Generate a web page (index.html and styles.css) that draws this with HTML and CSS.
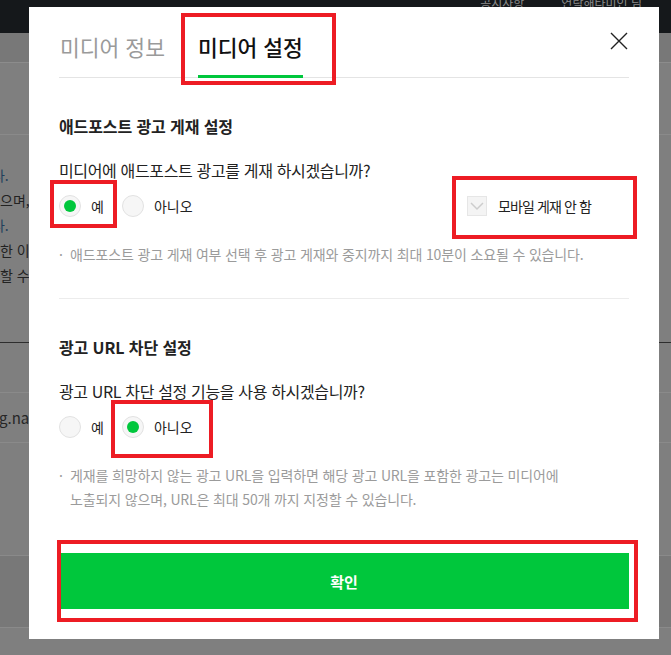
FILE: index.html
```html
<!DOCTYPE html>
<html lang="ko">
<head>
    <meta charset="UTF-8">
    <meta name="viewport" content="width=device-width, initial-scale=1.0">
    <title>미디어 설정</title>
    <link rel="stylesheet" href="styles.css">
</head>
<body>
    <!-- 뒤쪽 페이지 (딤 처리된 상태) -->
    <div class="page">
        <header class="topbar">
            <nav class="gnb">
                <a href="#">공지사항</a>
                <a href="#">연락해타미인 님</a>
            </nav>
        </header>
        <div class="subbar"></div>
        <div class="bg-block"></div>
        <div class="bg-notes">
            <p class="link cut">니다.</p>
            <p>으며, 기존</p>
            <p class="link cut">니다.</p>
            <p>한 이력</p>
            <p>할 수</p>
        </div>
        <div class="bg-row"></div>
        <div class="bg-row url">g.naver.com</div>
        <div class="bg-block tall"></div>
        <div class="bg-foot"></div>
    </div>

    <!-- 팝업 -->
    <div class="modal">
        <div class="tabs">
            <a href="#" class="tab">미디어 정보</a>
            <a href="#" class="tab on">미디어 설정</a>
            <button class="btn-close" type="button" aria-label="닫기">
                <svg width="18" height="18" viewBox="0 0 18 18">
                    <path d="M1 1 L17 17 M17 1 L1 17" stroke="#222" stroke-width="1.4" fill="none"/>
                </svg>
            </button>
        </div>

        <div class="section">
            <h3>애드포스트 광고 게재 설정</h3>
            <p class="question">미디어에 애드포스트 광고를 게재 하시겠습니까?</p>
            <div class="options">
                <label class="radio checked"><span class="circle"></span>예</label>
                <label class="radio"><span class="circle"></span>아니오</label>
                <label class="check">
                    <span class="box">
                        <svg width="20" height="20" viewBox="0 0 20 20">
                            <path d="M4 7 L10 13 L16 7" stroke="#cdcdcd" stroke-width="1.5" fill="none"/>
                        </svg>
                    </span>
                    모바일 게재 안 함
                </label>
            </div>
            <p class="note"><span class="dot">·</span>애드포스트 광고 게재 여부 선택 후 광고 게재와 중지까지 최대 10분이 소요될 수 있습니다.</p>
        </div>

        <div class="section line">
            <h3>광고 URL 차단 설정</h3>
            <p class="question">광고 URL 차단 설정 기능을 사용 하시겠습니까?</p>
            <div class="options">
                <label class="radio"><span class="circle"></span>예</label>
                <label class="radio checked"><span class="circle"></span>아니오</label>
            </div>
            <p class="note"><span class="dot">·</span>게재를 희망하지 않는 광고 URL을 입력하면 해당 광고 URL을 포함한 광고는 미디어에<br>노출되지 않으며, URL은 최대 50개 까지 지정할 수 있습니다.</p>
        </div>

        <button class="btn-ok" type="button">확인</button>
    </div>

    <!-- 캡처 표시 -->
    <div class="mark mark-tab"></div>
    <div class="mark mark-yes"></div>
    <div class="mark mark-mobile"></div>
    <div class="mark mark-no"></div>
    <div class="mark mark-btn"></div>
</body>
</html>
```

FILE: styles.css
```css
body {
    font-family: "Noto Sans CJK KR", "Noto Sans", sans-serif;
    margin: 0;
    padding: 0;
    width: 671px;
    height: 655px;
    overflow: hidden;
    position: relative;
    background-color: #7f7f7f;
}

p {
    margin: 0;
}

a {
    text-decoration: none;
    color: inherit;
}

/* 뒤쪽 페이지 */
.topbar {
    height: 33px;
    background-color: #15181b;
    overflow: hidden;
}

.gnb {
    display: flex;
    justify-content: flex-end;
    gap: 37px;
    margin-top: -6px;
    padding-right: 29px;
    font-size: 12px;
    line-height: 18px;
    color: #8a8a8a;
}

.subbar {
    height: 29px;
    background-color: #787878;
    border-bottom: 1px solid #8c8c8c;
}

.bg-block {
    height: 71px;
    border-bottom: 1px solid #8a8a8a;
}

.bg-block.tall {
    height: 112px;
}

.bg-notes {
    padding: 28px 0 54px;
    font-size: 14px;
    line-height: 25px;
    color: #222222;
    white-space: nowrap;
    border-bottom: 1px solid #2e2e2e;
}

.bg-notes .cut {
    text-indent: -21px;
}

.bg-notes .link {
    color: #1f3f5c;
}

.bg-row {
    height: 49px;
    border-bottom: 1px solid #8a8a8a;
}

.bg-row.url {
    line-height: 49px;
    font-size: 15px;
    color: #262626;
    text-indent: -1px;
    white-space: nowrap;
}

.bg-foot {
    height: 71px;
    background-color: #787878;
    border-bottom: 1px solid #8a8a8a;
}

/* 팝업 */
.modal {
    position: absolute;
    left: 29px;
    top: 7px;
    width: 630px;
    height: 632px;
    box-sizing: border-box;
    padding: 0 30px;
    background-color: #ffffff;
}

.tabs {
    display: flex;
    align-items: flex-end;
    height: 70px;
    border-bottom: 1px solid #e4e4e4;
}

.tab {
    font-size: 21.5px;
    line-height: 26px;
    padding: 0 0 15px 1px;
    border-bottom: 3px solid transparent;
    margin-bottom: -1px;
    margin-right: 33px;
    color: #9a9a9a;
}

.tab.on {
    color: #111111;
    font-weight: 500;
    border-bottom-color: #00c73c;
    padding-left: 0;
}

.btn-close {
    align-self: flex-start;
    margin: 25px 1px 0 auto;
    padding: 0;
    border: none;
    background: none;
    width: 18px;
    height: 18px;
    cursor: pointer;
}

.section {
    padding: 38px 0 32px;
}

.section.line {
    border-top: 1px solid #ececec;
}

.section h3 {
    margin: 0;
    font-size: 16px;
    line-height: 20px;
    font-weight: bold;
    letter-spacing: -0.1px;
    color: #222222;
}

.question {
    margin-top: 23px;
    font-size: 16px;
    line-height: 22px;
    letter-spacing: -0.35px;
    color: #222222;
}

.options {
    display: flex;
    align-items: center;
    height: 22px;
    margin-top: 14px;
}

.radio {
    display: flex;
    align-items: center;
    margin-right: 18px;
    font-size: 14px;
    color: #222222;
}

.circle {
    width: 22px;
    height: 22px;
    box-sizing: border-box;
    border: 1px solid #e2e2e2;
    border-radius: 50%;
    background-color: #f6f6f6;
    margin-right: 10px;
    display: flex;
    align-items: center;
    justify-content: center;
}

.radio.checked .circle::after {
    content: "";
    width: 12px;
    height: 12px;
    border-radius: 50%;
    background-color: #00c73c;
}

.check {
    display: flex;
    align-items: center;
    margin-left: auto;
    margin-right: 38px;
    font-size: 14px;
    letter-spacing: -0.9px;
    color: #222222;
}

.box {
    width: 20px;
    height: 20px;
    box-sizing: border-box;
    border: 1px solid #e6e6e6;
    background-color: #f4f4f4;
    margin-right: 11px;
    display: flex;
}

.box svg {
    margin: -1px;
}

.note {
    margin-top: 25px;
    padding-left: 11px;
    text-indent: -11px;
    font-size: 14px;
    line-height: 24px;
    letter-spacing: -0.15px;
    color: #9b9b9b;
}

.note .dot {
    display: inline-block;
    width: 11px;
    text-indent: 0;
}

.btn-ok {
    display: block;
    width: 100%;
    height: 56px;
    margin-top: 10px;
    border: none;
    background-color: #00c73c;
    color: #ffffff;
    font-family: inherit;
    font-size: 15px;
    font-weight: bold;
    cursor: pointer;
}

/* 빨간 표시 박스 */
.mark {
    position: absolute;
    box-sizing: border-box;
    border: 4px solid #ed1c24;
}

.mark-tab {
    left: 181px;
    top: 13px;
    width: 155px;
    height: 72px;
}

.mark-yes {
    left: 50px;
    top: 180px;
    width: 67px;
    height: 48px;
}

.mark-mobile {
    left: 452px;
    top: 176px;
    width: 185px;
    height: 63px;
}

.mark-no {
    left: 111px;
    top: 400px;
    width: 102px;
    height: 58px;
}

.mark-btn {
    left: 57px;
    top: 540px;
    width: 581px;
    height: 82px;
}
```
